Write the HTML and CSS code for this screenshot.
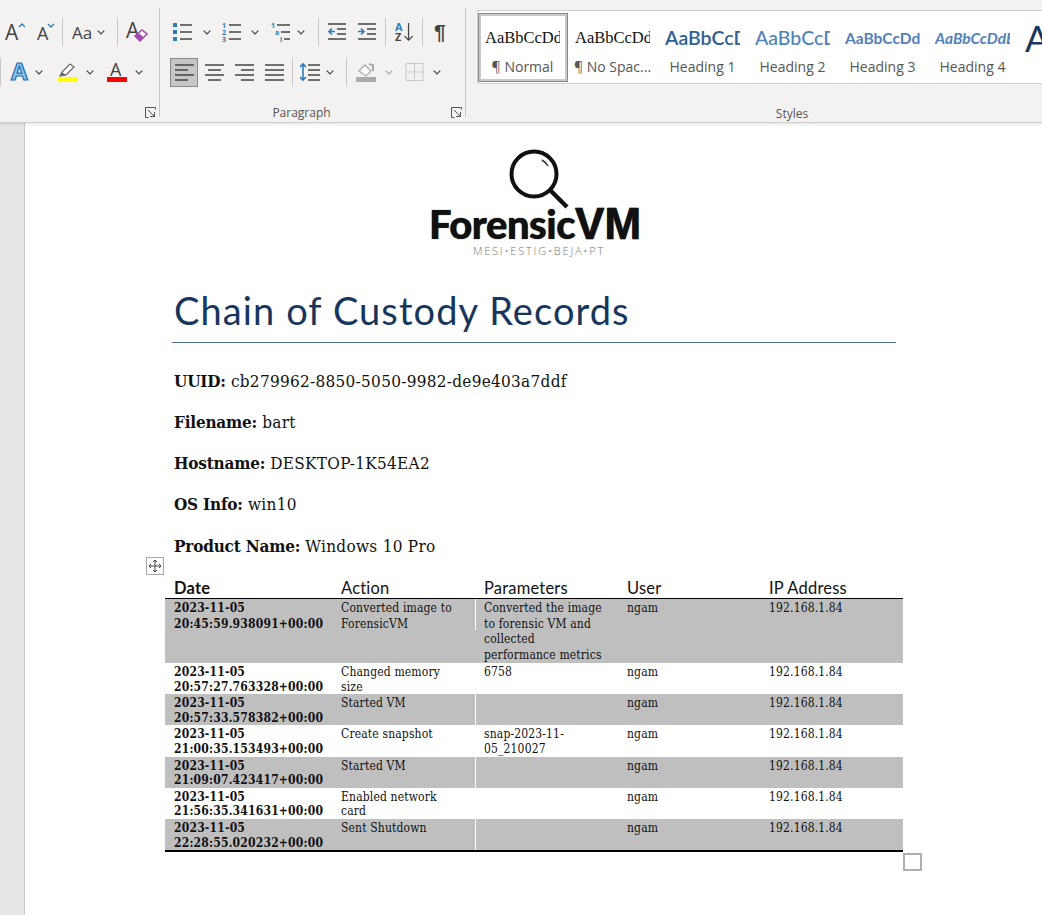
FILE: index.html
```html
<!DOCTYPE html>
<html lang="en">
<head>
  <meta charset="UTF-8">
  <title>Chain of Custody Records</title>
  <link rel="stylesheet" href="styles.css">
</head>
<body>
  <svg class="defs" width="0" height="0">
    <symbol id="chev" viewBox="0 0 8 5"><path d="M.7.7 4 4 7.3.7" fill="none" stroke="#444" stroke-width="1.2"/></symbol>
    <symbol id="launch" viewBox="0 0 11 11"><path d="M.5 10.5V.5h10M3 3l6.5 6.5M9.5 5v4.5H5M.5 10.5h3M10.5.5v2" fill="none" stroke="#555"/></symbol>
    <symbol id="left" viewBox="0 0 19 18"><path d="M0 2h19M0 7h13M0 12h19M0 17h13" stroke="#444" stroke-width="1.6"/></symbol>
    <symbol id="center" viewBox="0 0 19 18"><path d="M0 2h19M3 7h13M0 12h19M3 17h13" stroke="#444" stroke-width="1.6"/></symbol>
    <symbol id="right" viewBox="0 0 19 18"><path d="M0 2h19M6 7h13M0 12h19M6 17h13" stroke="#444" stroke-width="1.6"/></symbol>
    <symbol id="just" viewBox="0 0 19 18"><path d="M0 2h19M0 7h19M0 12h19M0 17h19" stroke="#444" stroke-width="1.6"/></symbol>
  </svg>

  <div class="ribbon">
    <div class="group group-font">
      <div class="tools top">
        <svg class="w20" viewBox="0 0 20 20"><text x="0" y="18" class="ic-a ic-lg">A</text><path d="M14 5l3-3 3 3" fill="none" stroke="#2b7cb8" stroke-width="1.4"/></svg>
        <svg class="w18 ml12" viewBox="0 0 18 20"><text x="0" y="18" class="ic-a ic-md">A</text><path d="M11 2l3 3 3-3" fill="none" stroke="#2b7cb8" stroke-width="1.4"/></svg>
        <span class="sep ml7"></span>
        <span class="aa ml9">Aa</span>
        <svg class="chev ml4"><use href="#chev"/></svg>
        <span class="sep ml12"></span>
        <svg class="w22 ml8" viewBox="0 0 22 22"><text x="0" y="17" class="ic-a ic-lg">A</text><path d="M9 15l7-6 5 4-7 7z" fill="#fff" stroke="#a24bb0" stroke-width="1.5"/><path d="M9 15l3.5-3 5 4-3.500 4z" fill="#a24bb0"/></svg>
      </div>
      <div class="tools">
        <span class="sep"></span>
        <svg class="w20 ml9" viewBox="0 0 20 20"><text x="1" y="18" class="ic-a ic-xl">A</text></svg>
        <svg class="chev ml5"><use href="#chev"/></svg>
        <svg class="w20 ml15" viewBox="0 0 20 20"><path d="M2 14l2-4 8-8 4 3-8 8z" fill="#fff" stroke="#666" stroke-width="1.2"/><path d="M2 14l2-4 4 3z" fill="#666"/><rect y="15" width="20" height="5" fill="#ff0"/></svg>
        <svg class="chev ml8"><use href="#chev"/></svg>
        <svg class="w20 ml13" viewBox="0 0 20 20"><text x="3" y="14" class="ic-a ic-sm">A</text><rect y="15" width="20" height="5" fill="#f00"/></svg>
        <svg class="chev ml8"><use href="#chev"/></svg>
      </div>
      <div class="group-foot">
        <span></span><span></span>
        <svg class="launch"><use href="#launch"/></svg>
      </div>
    </div>

    <div class="group group-para">
      <div class="tools top">
        <svg class="w20 ml13" viewBox="0 0 20 18"><path d="M0 0h4v4H0zM0 7h4v4H0zM0 14h4v4H0z" fill="#2b7cb8"/><path d="M7 2h12M7 9h12M7 16h12" stroke="#444" stroke-width="1.6"/></svg>
        <svg class="chev ml10"><use href="#chev"/></svg>
        <svg class="w20 ml11" viewBox="0 0 20 18"><text x="0" y="5" class="ic-n">1</text><text x="0" y="12" class="ic-n">2</text><text x="0" y="18.500" class="ic-n">3</text><path d="M7 2h12M7 9h12M7 16h12" stroke="#444" stroke-width="1.6"/></svg>
        <svg class="chev ml9"><use href="#chev"/></svg>
        <svg class="w20 ml12" viewBox="0 0 20 18"><text x="0" y="5" class="ic-n">1</text><text x="4" y="12" class="ic-n">a</text><text x="9" y="18.500" class="ic-n">i</text><path d="M6 2h13M10 9h9M13 16h6" stroke="#444" stroke-width="1.6"/></svg>
        <svg class="chev ml6"><use href="#chev"/></svg>
        <span class="sep ml13"></span>
        <svg class="w18 ml9" viewBox="0 0 18 18"><path d="M0 1h18M9 6h9M9 11h9M0 16h18" stroke="#444" stroke-width="1.600"/><path d="M7 8.500H1M4 5.500l-3 3 3 3" fill="none" stroke="#2b7cb8" stroke-width="1.600"/></svg>
        <svg class="w18 ml12" viewBox="0 0 18 18"><path d="M0 1h18M9 6h9M9 11h9M0 16h18" stroke="#444" stroke-width="1.600"/><path d="M0 8.500h6M3 5.500l3 3-3 3" fill="none" stroke="#2b7cb8" stroke-width="1.600"/></svg>
        <span class="sep ml9"></span>
        <svg class="w20 ml8" viewBox="0 0 20 22"><text x="0" y="10" class="ic-az">A</text><text x="0" y="21" class="ic-z">Z</text><path d="M15 1v19M10.500 15.500 15 20l4.500-4.500" fill="none" stroke="#444" stroke-width="1.400"/></svg>
        <span class="sep ml8"></span>
        <span class="pilcrow ml11">¶</span>
      </div>
      <div class="tools">
        <span class="active ml10"><svg class="w19"><use href="#left"/></svg></span>
        <svg class="w19 ml7"><use href="#center"/></svg>
        <svg class="w19 ml11"><use href="#right"/></svg>
        <svg class="w19 ml11"><use href="#just"/></svg>
        <span class="sep ml8"></span>
        <svg class="w20 ml7" viewBox="0 0 20 18"><path d="M8 2h12M8 7h12M8 12h12M8 17h12" stroke="#444" stroke-width="1.600"/><path d="M3 1v16M0 4l3-3 3 3M0 14l3 3 3-3" fill="none" stroke="#2b7cb8" stroke-width="1.600"/></svg>
        <svg class="chev ml6"><use href="#chev"/></svg>
        <span class="sep ml12"></span>
        <svg class="w20 ml9" viewBox="0 0 20 20"><path d="M3 9l6-6 6 6-5 5z" fill="#fff" stroke="#aaa" stroke-width="1.300"/><path d="M13 2l4 1v6" fill="none" stroke="#aaa" stroke-width="2"/><rect y="15" width="20" height="5" fill="#aaa"/></svg>
        <svg class="chev dim ml9"><use href="#chev"/></svg>
        <svg class="w19 ml12" viewBox="0 0 19 19"><path d="M.5.500h18v18H.5zM9.500.500v18M.5 9.500h18" fill="none" stroke="#aaa" stroke-dasharray="1.500 1"/></svg>
        <svg class="chev ml9"><use href="#chev"/></svg>
      </div>
      <div class="group-foot">
        <span></span><span class="para-label">Paragraph</span>
        <svg class="launch"><use href="#launch"/></svg>
      </div>
    </div>

    <div class="group-styles">
      <div class="gallery">
        <div class="style-item selected"><div class="sample s-normal">AaBbCcDdEe</div><div class="style-name">¶ Normal</div></div>
        <div class="style-item"><div class="sample s-normal">AaBbCcDdEe</div><div class="style-name">¶ No Spac...</div></div>
        <div class="style-item"><div class="sample s-h1">AaBbCcDd</div><div class="style-name">Heading 1</div></div>
        <div class="style-item"><div class="sample s-h2">AaBbCcDd</div><div class="style-name">Heading 2</div></div>
        <div class="style-item"><div class="sample s-h3">AaBbCcDdEe</div><div class="style-name">Heading 3</div></div>
        <div class="style-item"><div class="sample s-h4">AaBbCcDdEe</div><div class="style-name">Heading 4</div></div>
        <div class="style-item"><div class="sample s-title">A</div></div>
      </div>
      <div class="styles-label">Styles</div>
    </div>
  </div>

  <div class="workspace">
    <div class="margin-strip"></div>
    <div class="page">
      <div class="logo">
        <svg class="lens" viewBox="0 0 64 62"><circle cx="26" cy="25" r="22.500" fill="#fff" stroke="#111" stroke-width="4"/><path d="M42 41l17 17" stroke="#111" stroke-width="4.500"/><path d="M34 11a16 16 0 0 1 6 6" fill="none" stroke="#333" stroke-width="1.500"/></svg>
        <div class="logo-name">Forensic<span class="logo-vm">VM</span></div>
        <div class="logo-sub">MESI•ESTIG•BEJA•PT</div>
      </div>

      <h1>Chain of Custody Records</h1>

      <p><b>UUID:</b> cb279962-8850-5050-9982-de9e403a7ddf</p>
      <p><b>Filename:</b> bart</p>
      <p><b>Hostname:</b> DESKTOP-1K54EA2</p>
      <p><b>OS Info:</b> win10</p>
      <p><b>Product Name:</b> Windows 10 Pro</p>

      <div class="table-wrap">
        <span class="move-handle"><svg viewBox="0 0 14 14"><path d="M7 1v12M1 7h12M5 3l2-2 2 2M5 11l2 2 2-2M3 5 1 7l2 2M11 5l2 2-2 2" fill="none" stroke="#444"/></svg></span>
        <table>
          <colgroup><col class="c1"><col class="c2"><col class="c3"><col class="c4"><col class="c5"></colgroup>
          <thead>
            <tr><th class="date">Date</th><th>Action</th><th>Parameters</th><th>User</th><th>IP Address</th></tr>
          </thead>
          <tbody>
            <tr class="tall"><td class="date">2023-11-05<br>20:45:59.938091+00:00</td><td>Converted image to<br>ForensicVM</td><td>Converted the image<br>to forensic VM and<br>collected<br>performance metrics</td><td>ngam</td><td>192.168.1.84</td></tr>
            <tr><td class="date">2023-11-05<br>20:57:27.763328+00:00</td><td>Changed memory<br>size</td><td>6758</td><td>ngam</td><td>192.168.1.84</td></tr>
            <tr><td class="date">2023-11-05<br>20:57:33.578382+00:00</td><td>Started VM</td><td></td><td>ngam</td><td>192.168.1.84</td></tr>
            <tr><td class="date">2023-11-05<br>21:00:35.153493+00:00</td><td>Create snapshot</td><td>snap-2023-11-<br>05_210027</td><td>ngam</td><td>192.168.1.84</td></tr>
            <tr><td class="date">2023-11-05<br>21:09:07.423417+00:00</td><td>Started VM</td><td></td><td>ngam</td><td>192.168.1.84</td></tr>
            <tr><td class="date">2023-11-05<br>21:56:35.341631+00:00</td><td>Enabled network<br>card</td><td></td><td>ngam</td><td>192.168.1.84</td></tr>
            <tr><td class="date">2023-11-05<br>22:28:55.020232+00:00</td><td>Sent Shutdown</td><td></td><td>ngam</td><td>192.168.1.84</td></tr>
          </tbody>
        </table>
        <span class="resize-handle"></span>
      </div>
    </div>
  </div>
</body>
</html>
```

FILE: styles.css
```css
html, body {
  margin: 0;
  height: 915px;
  overflow: hidden;
}
body {
  display: flex;
  flex-direction: column;
  font-family: "DejaVu Serif Condensed", "DejaVu Serif", serif;
  font-stretch: condensed;
  background: #fff;
}
.defs {
  position: absolute;
}

/* ribbon */
.ribbon {
  display: flex;
  flex: none;
  height: 123px;
  box-sizing: border-box;
  padding-top: 8px;
  background: #f3f2f1;
  border-bottom: 1px solid #d2d0ce;
  box-shadow: 0 1px 3px rgba(0, 0, 0, .12);
  position: relative;
  overflow: hidden;
  font-family: "Open Sans", sans-serif;
  font-stretch: normal;
  color: #444;
}
.group {
  display: flex;
  flex-direction: column;
  flex: none;
  box-sizing: border-box;
  height: 109px;
  border-right: 1px solid #c8c6c4;
}
.group-font { width: 160px; }
.group-para { width: 306px; }
.tools {
  display: flex;
  flex: none;
  align-items: center;
  height: 40px;
}
.top { margin-top: 4px; }
.group-font .top { padding-left: 5px; }
.group-foot {
  display: grid;
  flex: none;
  grid-template-columns: 1fr auto 1fr;
  align-items: center;
  height: 17px;
  margin-top: 12px;
  font-size: 12px;
  color: #555;
}
.para-label { margin-right: 22px; }
.launch {
  justify-self: end;
  width: 11px;
  height: 11px;
  margin-right: 3px;
}
.sep {
  flex: none;
  width: 1px;
  height: 28px;
  background: #c8c6c4;
}
.chev { flex: none; width: 8px; height: 5px; }
.dim { opacity: .4; }
.w18 { flex: none; width: 18px; height: 20px; }
.w19 { flex: none; width: 19px; height: 18px; }
.w20 { flex: none; width: 20px; height: 20px; }
.w22 { flex: none; width: 22px; height: 22px; }
.ml4 { margin-left: 4px; }
.ml5 { margin-left: 5px; }
.ml6 { margin-left: 6px; }
.ml7 { margin-left: 7px; }
.ml8 { margin-left: 8px; }
.ml9 { margin-left: 9px; }
.ml10 { margin-left: 10px; }
.ml11 { margin-left: 11px; }
.ml12 { margin-left: 12px; }
.ml13 { margin-left: 13px; }
.ml15 { margin-left: 15px; }
.aa { font-size: 17px; color: #444; width: 21px; white-space: nowrap; }
.pilcrow { font: bold 21px "Liberation Sans", sans-serif; color: #444; }
.active {
  flex: none;
  display: flex;
  align-items: center;
  justify-content: center;
  box-sizing: border-box;
  width: 28px;
  height: 29px;
  background: #c8c6c4;
  border: 1px solid #8a8886;
}
.ic-a { font-family: "Open Sans", sans-serif; fill: #444; }
.ic-lg { font-size: 21px; }
.ic-md { font-size: 18px; }
.ic-sm { font-size: 18px; }
.ic-xl { font-size: 24px; font-weight: 700; fill: #8cc3ea; stroke: #1c6fb5; stroke-width: 1.2px; }
.ic-n { font: bold 7px "Open Sans", sans-serif; fill: #2b7cb8; }
.ic-az { font: bold 12px "Open Sans", sans-serif; fill: #2b7cb8; }
.ic-z { font: bold 12px "Open Sans", sans-serif; fill: #444; }

/* style gallery */
.group-styles {
  flex: 1;
  min-width: 0;
  margin: 2px 0 0 11px;
}
.gallery {
  display: flex;
  box-sizing: border-box;
  height: 74px;
  padding: 2px 0 0;
  background: #fff;
  border: 1px solid #d2d0ce;
  border-right: 0;
}
.style-item {
  flex: none;
  box-sizing: border-box;
  width: 90px;
  height: 69px;
  padding: 6px 5px 0 4px;
  border: 3px solid transparent;
}
.selected {
  border-color: #c8c8c8;
  outline: 1px solid #8a8886;
  outline-offset: -1px;
}
.sample {
  height: 35px;
  overflow: hidden;
  white-space: nowrap;
}
.s-normal { font: 16.500px/32px "Liberation Serif", serif; color: #111; }
.s-h1 { font: 600 19.500px/32px Lato, sans-serif; color: #2f5f96; }
.s-h2 { font: 500 19.500px/32px Lato, sans-serif; color: #4f81bd; }
.s-h3 { font: 700 15.500px/32px Lato, sans-serif; color: #4f81bd; }
.s-h4 { font: italic 700 15.500px/32px Lato, sans-serif; color: #4f81bd; }
.s-title { font: 36px/32px Lato, sans-serif; color: #17365d; overflow: visible; }
.style-name {
  margin: 0 -4px;
  font-size: 14px;
  line-height: 20px;
  text-align: center;
  white-space: nowrap;
  color: #555;
}
.styles-label {
  margin-top: 21px;
  text-align: center;
  font-size: 12px;
  color: #555;
  width: 630px;
}

/* document */
.workspace {
  display: flex;
  flex: 1;
  min-height: 0;
}
.margin-strip {
  flex: none;
  width: 24px;
  background: #e6e6e6;
  border-right: 1px solid #c8c8c8;
}
.page {
  flex: 1;
  box-sizing: border-box;
  padding: 26px 0 0 149px;
}
.logo {
  display: flex;
  flex-direction: column;
  align-items: center;
  width: 722px;
  color: #111;
  height: 120px;
  font-stretch: normal;
}
.lens {
  flex: none;
  width: 64px;
  height: 62px;
  margin-left: 10px;
}
.logo-name {
  margin-top: -5px;
  height: 36px;
  font: 900 40px/36px Lato, sans-serif;
  letter-spacing: -.5px;
  white-space: nowrap;
  text-shadow: 0 0 1px #111;
}
.logo-vm {
  font-family: "Liberation Sans", sans-serif;
  font-weight: 700;
  font-size: 44px;
  letter-spacing: 0;
  -webkit-text-stroke: .6px #111;
}
.logo-sub {
  margin: 2px 0 0 8px;
  font: 300 11px/14px "Open Sans", sans-serif;
  letter-spacing: 1.800px;
  color: #777;
}
h1 {
  box-sizing: border-box;
  width: 724px;
  height: 74px;
  margin: 0 0 0 -2px;
  padding: 16px 0 0 2px;
  font: 400 38px/50px Lato, sans-serif;
  color: #17365d;
  border-bottom: 1px solid #4a6a90;
  letter-spacing: 1.100px;
}
p {
  margin: 0;
  height: 41.300px;
  line-height: 41.300px;
  font-size: 17px;
  letter-spacing: .3px;
  color: #111;
}
p b { letter-spacing: -.2px; }
h1 + p { margin-top: 17.500px; }

/* table */
.table-wrap {
  position: relative;
  width: 738px;
  margin: 11.500px 0 0 -9px;
}
table {
  width: 738px;
  table-layout: fixed;
  border-collapse: collapse;
  border-bottom: 2px solid #000;
}
.c1 { width: 167px; }
.c2, .c3, .c5 { width: 143px; }
.c4 { width: 142px; }
th {
  height: 20px;
  padding: 0 9px;
  text-align: left;
  font: 400 16.500px/20px Lato, sans-serif;
  letter-spacing: .2px;
  color: #111;
  border-bottom: 1px solid #000;
}
th.date { font-weight: 700; }
td {
  height: 31.200px;
  box-sizing: border-box;
  padding: 2px 9px 0;
  vertical-align: top;
  font-size: 12px;
  line-height: 14.600px;
  letter-spacing: .15px;
  color: #111;
}
td.date { font-weight: 700; letter-spacing: .2px; }
.tall td { height: 63.600px; line-height: 15.400px; }
tbody tr:nth-child(odd) td { background-color: #bfbfbf; }
tbody tr:nth-child(odd) td:nth-child(3) {
  background-image: linear-gradient(#fff, #fff);
  background-size: 1px 31px;
  background-repeat: no-repeat;
}
.move-handle {
  position: absolute;
  left: -19px;
  top: -21px;
  box-sizing: border-box;
  width: 18px;
  height: 18px;
  padding: 1px;
  border: 1px solid #a8a8a8;
  background: #fff;
}
.move-handle svg { display: block; width: 14px; height: 14px; }
.resize-handle {
  position: absolute;
  right: -19px;
  bottom: -19px;
  box-sizing: border-box;
  width: 19px;
  height: 18px;
  border: 2px solid #b0b0b0;
  background: #fff;
}
```
